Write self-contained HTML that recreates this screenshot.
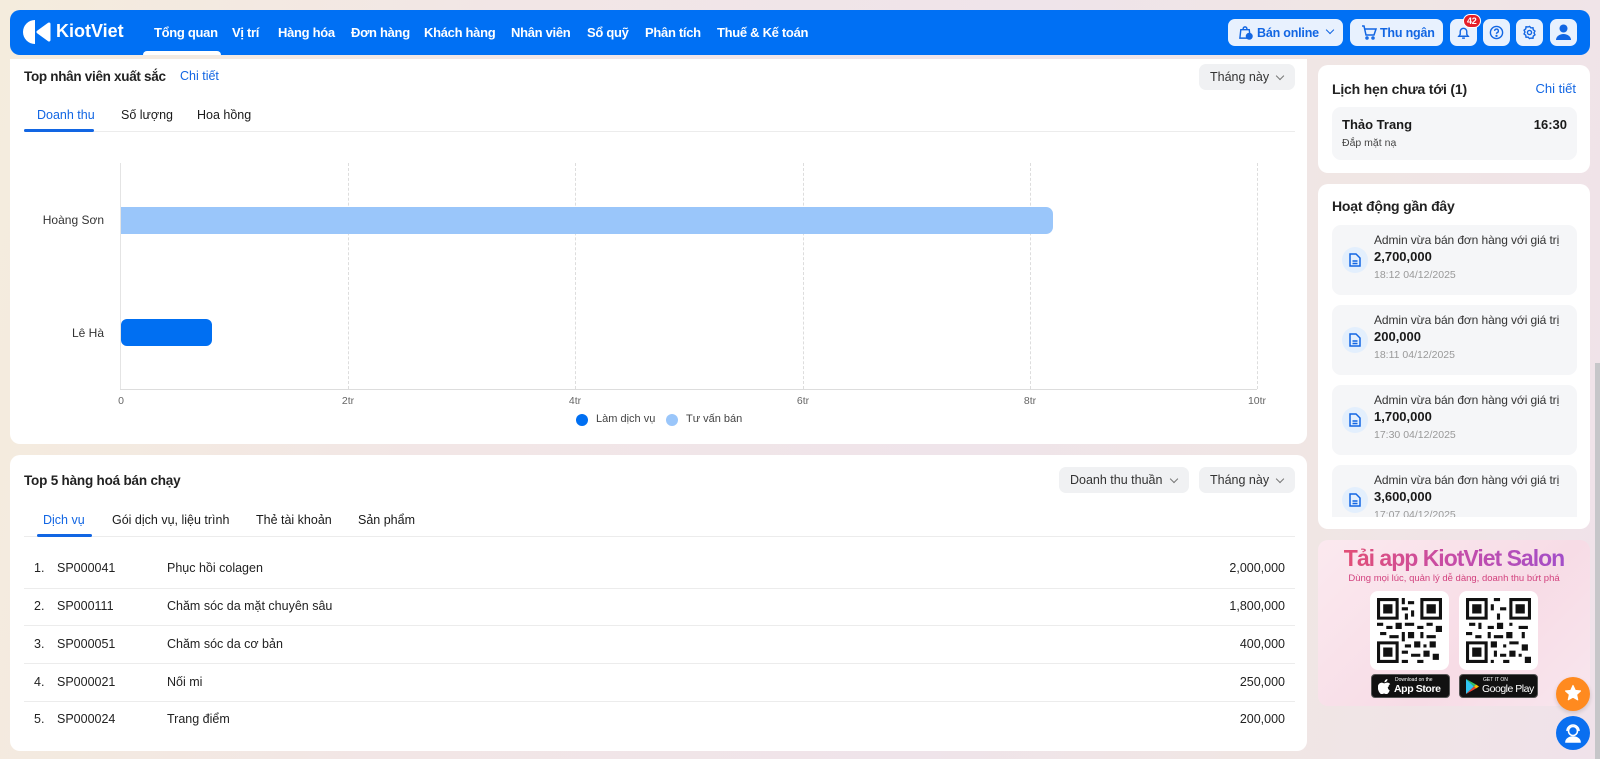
<!DOCTYPE html>
<html><head><meta charset="utf-8"><style>
*{box-sizing:border-box;margin:0;padding:0}
body{width:1600px;height:759px;overflow:hidden;font-family:"Liberation Sans",sans-serif;color:#1a1a1a;background:linear-gradient(100deg,#f4ecdd 0%,#f2e6e6 30%,#efe4ea 60%,#f0e6e4 80%,#f0e2ea 100%);position:relative;font-size:13px}
.a{position:absolute;white-space:nowrap}
.card{position:absolute;background:#fff;border-radius:10px}
.nav{position:absolute;left:10px;top:10px;width:1580px;height:45px;background:#0070f4;border-radius:10px}
.ni{position:absolute;top:15px;color:#fff;font-weight:bold;font-size:13px;letter-spacing:-0.3px}
.btn{position:absolute;top:9px;height:27px;background:#e8f1fe;border-radius:7px;color:#1266e3;font-weight:bold;font-size:12.5px;letter-spacing:-0.2px}
.pill{position:absolute;height:26px;background:#f0f1f3;border-radius:7px;font-size:12.5px;color:#333;line-height:26px;padding-left:11px}
.pill:after{content:"";position:absolute;right:12px;top:9px;width:5px;height:5px;border-right:1px solid #777;border-bottom:1px solid #777;transform:rotate(45deg)}
.grid{position:absolute;top:163px;height:226px;border-left:1px dashed #ddd}
.xl{position:absolute;top:395px;font-size:10.5px;color:#666;transform:translateX(-50%)}
.item{position:absolute;left:14px;width:245px;height:70px;background:#f5f6f8;border-radius:9px}
.ic{position:absolute;left:10px;top:22px;width:26px;height:26px;border-radius:50%;background:#e3effd}
.row{position:absolute;left:24px;width:1271px;height:1px;background:#ececec}
.rt{position:absolute;font-size:12.5px;color:#222}
.it1{position:absolute;left:42px;top:8px;font-size:12px;color:#333;letter-spacing:-0.1px;white-space:nowrap}
</style></head><body>

<div class="nav">
  <svg class="a" style="left:13px;top:8px" width="28" height="28" viewBox="0 0 28 28"><path d="M12 2 A12 12 0 0 0 12 26 Z" fill="#fff"/><path d="M26 6 L15 14 L26 22 Z" fill="#fff" stroke="#fff" stroke-width="3" stroke-linejoin="round"/></svg>
  <div class="a" style="left:46px;top:11px;color:#fff;font-weight:bold;font-size:18px">KiotViet</div>
  <div class="ni" style="left:144px">Tổng quan</div>
  <div class="a" style="left:133px;top:41px;width:78px;height:4px;background:#fff;border-radius:4px 4px 0 0"></div>
  <div class="ni" style="left:222px">Vị trí</div>
  <div class="ni" style="left:268px">Hàng hóa</div>
  <div class="ni" style="left:341px">Đơn hàng</div>
  <div class="ni" style="left:414px">Khách hàng</div>
  <div class="ni" style="left:501px">Nhân viên</div>
  <div class="ni" style="left:577px">Sổ quỹ</div>
  <div class="ni" style="left:635px">Phân tích</div>
  <div class="ni" style="left:707px">Thuế &amp; Kế toán</div>
  <div class="btn" style="left:1218px;width:115px"><svg class="a" style="left:10px;top:6px" width="15" height="15" viewBox="0 0 16 16" fill="none" stroke="#1266e3" stroke-width="1.5"><path d="M3 5h9l1 9H2z"/><path d="M5.5 5V4a2 2 0 0 1 4 0v1"/><circle cx="12" cy="12" r="3" fill="#1266e3"/></svg><span class="a" style="left:29px;top:7px">Bán online</span><span class="a" style="left:99px;top:8px;width:6px;height:6px;border-right:1.5px solid #1266e3;border-bottom:1.5px solid #1266e3;transform:rotate(45deg)"></span></div>
  <div class="btn" style="left:1340px;width:93px"><svg class="a" style="left:11px;top:6px" width="16" height="15" viewBox="0 0 16 15" fill="none" stroke="#1266e3" stroke-width="1.5"><path d="M1 1h2l2 9h8l2-6H4"/><circle cx="6" cy="13" r="1"/><circle cx="12" cy="13" r="1"/></svg><span class="a" style="left:30px;top:7px">Thu ngân</span></div>
  <div class="btn" style="left:1440px;width:27px"><svg class="a" style="left:6px;top:6px" width="15" height="15" viewBox="0 0 16 16" fill="none" stroke="#1266e3" stroke-width="1.5"><path d="M3 12h10l-1.5-2V7a3.5 3.5 0 0 0-7 0v3z"/><path d="M6.5 14h3"/></svg><span class="a" style="left:13px;top:-5px;background:#e5202a;color:#fff;font-size:9px;border-radius:8px;padding:1px 3px;border:1px solid #fff">42</span></div>
  <div class="btn" style="left:1473px;width:27px"><svg class="a" style="left:6px;top:6px" width="15" height="15" viewBox="0 0 16 16" fill="none" stroke="#1266e3" stroke-width="1.5"><circle cx="8" cy="8" r="6.5"/><path d="M6 6.3a2 2 0 1 1 2.5 2c-.5.2-.5.6-.5 1.2"/><circle cx="8" cy="11.6" r=".5" fill="#1266e3"/></svg></div>
  <div class="btn" style="left:1506px;width:27px"><svg class="a" style="left:6px;top:6px" width="15" height="15" viewBox="0 0 16 16" fill="none" stroke="#1266e3" stroke-width="1.5"><circle cx="8" cy="8" r="2.2"/><path d="M8 1.5l1.5 1.6 2.2-.2.3 2.2 1.8 1.4-1 2 1 2-1.8 1.4-.3 2.2-2.2-.2L8 14.5l-1.5-1.6-2.2.2-.3-2.2L2.2 9.5l1-2-1-2L4 4.1l.3-2.2 2.2.2z"/></svg></div>
  <div class="btn" style="left:1540px;width:27px"><svg class="a" style="left:5px;top:4px" width="17" height="19" viewBox="0 0 17 19" fill="#1266e3"><circle cx="8.5" cy="5.5" r="4"/><path d="M1 17a7.5 6 0 0 1 15 0z"/></svg></div>
</div>

<!-- card 1 -->
<div class="card" style="left:10px;top:59px;width:1297px;height:385px;border-radius:0 0 10px 10px"></div>
<div class="a" style="left:24px;top:69px;font-size:13.5px;font-weight:bold;color:#222;letter-spacing:-0.3px">Top nhân viên xuất sắc</div>
<div class="a" style="left:180px;top:69px;font-size:12.5px;color:#1266e3">Chi tiết</div>
<div class="pill" style="left:1199px;top:64px;width:96px">Tháng này</div>
<div class="a" style="left:24px;top:131px;width:1271px;height:1px;background:#ececec"></div>
<div class="a" style="left:37px;top:108px;color:#1266e3;font-size:12.5px">Doanh thu</div>
<div class="a" style="left:24px;top:129px;width:70px;height:3px;background:#1266e3;border-radius:2px"></div>
<div class="a" style="left:121px;top:108px;font-size:12.5px">Số lượng</div>
<div class="a" style="left:197px;top:108px;font-size:12.5px">Hoa hồng</div>

<div class="grid" style="left:120px;border-left:1px solid #e4e4e4"></div>
<div class="grid" style="left:348px"></div>
<div class="grid" style="left:575px"></div>
<div class="grid" style="left:803px"></div>
<div class="grid" style="left:1030px"></div>
<div class="grid" style="left:1257px"></div>
<div class="a" style="left:120px;top:389px;width:1137px;height:1px;background:#ddd"></div>
<div class="a" style="left:121px;top:207px;width:932px;height:27px;background:#9ac6fa;border-radius:0 7px 7px 0"></div>
<div class="a" style="left:121px;top:319px;width:91px;height:27px;background:#006ff2;border-radius:6px"></div>
<div class="a" style="left:0;width:104px;text-align:right;top:213px;font-size:12px;color:#333">Hoàng Sơn</div>
<div class="a" style="left:0;width:104px;text-align:right;top:326px;font-size:12px;color:#333">Lê Hà</div>
<div class="xl" style="left:121px">0</div>
<div class="xl" style="left:348px">2tr</div>
<div class="xl" style="left:575px">4tr</div>
<div class="xl" style="left:803px">6tr</div>
<div class="xl" style="left:1030px">8tr</div>
<div class="xl" style="left:1257px">10tr</div>
<div class="a" style="left:576px;top:414px;width:12px;height:12px;border-radius:50%;background:#006ff2"></div>
<div class="a" style="left:596px;top:413px;font-size:11px;color:#444">Làm dịch vụ</div>
<div class="a" style="left:666px;top:414px;width:12px;height:12px;border-radius:50%;background:#9ac6fa"></div>
<div class="a" style="left:686px;top:413px;font-size:11px;color:#444">Tư vấn bán</div>

<!-- card 2 -->
<div class="card" style="left:10px;top:455px;width:1297px;height:296px"></div>
<div class="a" style="left:24px;top:473px;font-size:13.5px;font-weight:bold;color:#222;letter-spacing:-0.2px">Top 5 hàng hoá bán chạy</div>
<div class="pill" style="left:1059px;top:467px;width:130px">Doanh thu thuần</div>
<div class="pill" style="left:1199px;top:467px;width:96px">Tháng này</div>
<div class="a" style="left:24px;top:536px;width:1271px;height:1px;background:#ececec"></div>
<div class="a" style="left:43px;top:513px;color:#1266e3;font-size:12.5px">Dịch vụ</div>
<div class="a" style="left:37px;top:534px;width:55px;height:3px;background:#1266e3;border-radius:2px"></div>
<div class="a" style="left:112px;top:513px;font-size:12.5px">Gói dịch vụ, liệu trình</div>
<div class="a" style="left:256px;top:513px;font-size:12.5px">Thẻ tài khoản</div>
<div class="a" style="left:358px;top:513px;font-size:12.5px">Sản phẩm</div>

<div class="rt" style="left:34px;top:561px">1.</div><div class="rt" style="left:57px;top:561px">SP000041</div><div class="rt" style="left:167px;top:561px">Phục hồi colagen</div><div class="rt" style="right:315px;top:561px">2,000,000</div>
<div class="row" style="top:588px"></div>
<div class="rt" style="left:34px;top:599px">2.</div><div class="rt" style="left:57px;top:599px">SP000111</div><div class="rt" style="left:167px;top:599px">Chăm sóc da mặt chuyên sâu</div><div class="rt" style="right:315px;top:599px">1,800,000</div>
<div class="row" style="top:625px"></div>
<div class="rt" style="left:34px;top:637px">3.</div><div class="rt" style="left:57px;top:637px">SP000051</div><div class="rt" style="left:167px;top:637px">Chăm sóc da cơ bản</div><div class="rt" style="right:315px;top:637px">400,000</div>
<div class="row" style="top:663px"></div>
<div class="rt" style="left:34px;top:675px">4.</div><div class="rt" style="left:57px;top:675px">SP000021</div><div class="rt" style="left:167px;top:675px">Nối mi</div><div class="rt" style="right:315px;top:675px">250,000</div>
<div class="row" style="top:701px"></div>
<div class="rt" style="left:34px;top:712px">5.</div><div class="rt" style="left:57px;top:712px">SP000024</div><div class="rt" style="left:167px;top:712px">Trang điểm</div><div class="rt" style="right:315px;top:712px">200,000</div>

<!-- right column -->
<div class="card" style="left:1318px;top:65px;width:272px;height:108px">
  <div class="a" style="left:14px;top:16px;font-size:14px;font-weight:bold;color:#222;letter-spacing:-0.2px">Lịch hẹn chưa tới (1)</div>
  <div class="a" style="right:14px;top:16px;font-size:13px;color:#1266e3">Chi tiết</div>
  <div class="a" style="left:14px;top:42px;width:245px;height:53px;background:#f5f6f8;border-radius:9px">
    <div class="a" style="left:10px;top:10px;font-weight:bold;font-size:13px">Thảo Trang</div>
    <div class="a" style="right:10px;top:10px;font-weight:bold;font-size:13px">16:30</div>
    <div class="a" style="left:10px;top:30px;font-size:10.5px;color:#444">Đắp mặt nạ</div>
  </div>
</div>
<div class="card" style="left:1318px;top:184px;width:272px;height:345px;overflow:hidden">
  <div class="a" style="left:14px;top:14px;font-size:14px;font-weight:bold;color:#222;letter-spacing:-0.2px">Hoạt động gần đây</div>
  <div style="position:absolute;left:0;top:0;width:272px;height:333px;overflow:hidden">
  <div class="item" style="top:41px"><div class="ic"><svg class="a" style="left:7px;top:6px" width="12" height="14" viewBox="0 0 12 14" fill="none" stroke="#1266e3" stroke-width="1.5"><path d="M1 1h6l4 4v8H1z"/><path d="M3.5 8h5M3.5 10.5h5"/></svg></div><div class="it1">Admin vừa bán đơn hàng với giá trị</div><div class="a" style="left:42px;top:24px;font-size:13px;font-weight:bold">2,700,000</div><div class="a" style="left:42px;top:44px;font-size:10.5px;color:#999">18:12 04/12/2025</div></div>
  <div class="item" style="top:121px"><div class="ic"><svg class="a" style="left:7px;top:6px" width="12" height="14" viewBox="0 0 12 14" fill="none" stroke="#1266e3" stroke-width="1.5"><path d="M1 1h6l4 4v8H1z"/><path d="M3.5 8h5M3.5 10.5h5"/></svg></div><div class="it1">Admin vừa bán đơn hàng với giá trị</div><div class="a" style="left:42px;top:24px;font-size:13px;font-weight:bold">200,000</div><div class="a" style="left:42px;top:44px;font-size:10.5px;color:#999">18:11 04/12/2025</div></div>
  <div class="item" style="top:201px"><div class="ic"><svg class="a" style="left:7px;top:6px" width="12" height="14" viewBox="0 0 12 14" fill="none" stroke="#1266e3" stroke-width="1.5"><path d="M1 1h6l4 4v8H1z"/><path d="M3.5 8h5M3.5 10.5h5"/></svg></div><div class="it1">Admin vừa bán đơn hàng với giá trị</div><div class="a" style="left:42px;top:24px;font-size:13px;font-weight:bold">1,700,000</div><div class="a" style="left:42px;top:44px;font-size:10.5px;color:#999">17:30 04/12/2025</div></div>
  <div class="item" style="top:281px"><div class="ic"><svg class="a" style="left:7px;top:6px" width="12" height="14" viewBox="0 0 12 14" fill="none" stroke="#1266e3" stroke-width="1.5"><path d="M1 1h6l4 4v8H1z"/><path d="M3.5 8h5M3.5 10.5h5"/></svg></div><div class="it1">Admin vừa bán đơn hàng với giá trị</div><div class="a" style="left:42px;top:24px;font-size:13px;font-weight:bold">3,600,000</div><div class="a" style="left:42px;top:44px;font-size:10.5px;color:#999">17:07 04/12/2025</div></div>
  </div>
</div>

<div class="card" style="left:1318px;top:540px;width:272px;height:166px;background:linear-gradient(135deg,#fbe9ef,#f7dce6 60%,#f9e6ee)">
  <div class="a" style="left:0;width:272px;text-align:center;top:1px;font-size:23px;font-weight:bold;letter-spacing:-1px;background:linear-gradient(90deg,#e8506a,#c64ca8,#9a4fd0);-webkit-background-clip:text;background-clip:text;color:transparent;line-height:34px">Tải app KiotViet Salon</div>
  <div class="a" style="left:0;width:272px;text-align:center;top:33px;font-size:9.5px;color:#d2417e">Dùng mọi lúc, quản lý dễ dàng, doanh thu bứt phá</div>
  <div class="a" style="left:52px;top:51px;width:79px;height:79px;background:#fff;border-radius:8px"><svg class="a" style="left:7px;top:7px" width="65" height="65" viewBox="0 0 21 21"><g fill="#111"><path d="M0 0h7v7H0zM14 0h7v7h-7zM0 14h7v7H0z"/></g><g fill="#fff"><path d="M1 1h5v5H1zM15 1h5v5h-5zM1 15h5v5H1z"/></g><g fill="#111"><path d="M2 2h3v3H2zM16 2h3v3h-3zM2 16h3v3H2z"/><path d="M8 0h1v2H8zM10 1h2v1h-2zM8 3h2v1H8zM11 4h1v2h-1zM9 5h1v2H9zM0 8h2v1H0zM3 9h2v1H3zM6 8h2v2H6zM9 8h3v1H9zM13 9h2v1h-2zM16 8h2v1h-2zM19 9h2v2h-2zM1 11h2v1H1zM4 12h3v1H4zM8 11h1v3H8zM10 11h2v2h-2zM14 11h1v2h-1zM16 12h3v1h-3zM9 15h2v1H9zM12 14h2v2h-2zM15 15h1v1h-1zM17 14h2v2h-2zM8 17h2v1H8zM11 18h3v1h-3zM15 17h2v2h-2zM18 18h2v2h-2zM8 20h2v1H8zM13 20h2v1h-2z"/></g></svg></div>
  <div class="a" style="left:141px;top:51px;width:79px;height:79px;background:#fff;border-radius:8px"><svg class="a" style="left:7px;top:7px" width="65" height="65" viewBox="0 0 21 21"><g fill="#111"><path d="M0 0h7v7H0zM14 0h7v7h-7zM0 14h7v7H0z"/></g><g fill="#fff"><path d="M1 1h5v5H1zM15 1h5v5h-5zM1 15h5v5H1z"/></g><g fill="#111"><path d="M2 2h3v3H2zM16 2h3v3h-3zM2 16h3v3H2z"/><path d="M9 0h2v1H9zM8 2h1v2H8zM11 3h2v1h-2zM10 5h1v2h-1zM1 8h2v1H1zM4 8h1v2H4zM7 9h2v1H7zM10 8h2v2h-2zM14 8h1v1h-1zM17 9h3v1h-3zM0 11h2v1H0zM3 12h2v1H3zM7 11h1v2H7zM9 12h3v1H9zM13 11h2v2h-2zM18 11h1v2h-1zM8 14h2v2H8zM12 15h1v1h-1zM14 14h3v1h-3zM18 15h2v2h-2zM9 17h1v2H9zM11 18h2v1h-2zM14 17h2v2h-2zM17 18h1v1h-1zM19 19h2v2h-2zM8 20h1v1H8zM12 20h2v1h-2z"/></g></svg></div>
  <div class="a" style="left:53px;top:134px;width:79px;height:24px;background:#111;border-radius:4px;border:1px solid #555;overflow:hidden"><svg class="a" style="left:6px;top:4px" width="13" height="15" viewBox="0 0 13 15" fill="#fff"><path d="M10.5 8c0-2 1.6-2.8 1.7-2.9-1-1.4-2.4-1.5-2.9-1.5-1.2-.1-2.4.7-3 .7s-1.6-.7-2.6-.7C2.3 3.7 1 4.5.4 5.8-.9 8.1.1 11.6 1.4 13.4c.6.9 1.3 1.9 2.3 1.8.9 0 1.3-.6 2.4-.6s1.4.6 2.4.6 1.6-.9 2.2-1.8c.7-1 1-2 1-2.1 0 0-1.9-.7-1.900-3.3zM8.7 2.3c.5-.6.8-1.4.7-2.3-.7 0-1.6.5-2.1 1.1-.5.5-.9 1.4-.8 2.2.8.1 1.7-.4 2.2-1z"/></svg><span class="a" style="left:23px;top:2px;color:#fff;font-size:5px">Download on the</span><span class="a" style="left:22px;top:8px;color:#fff;font-size:10.5px;font-weight:bold;letter-spacing:-.4px">App Store</span></div>
  <div class="a" style="left:141px;top:134px;width:79px;height:24px;background:#111;border-radius:4px;border:1px solid #555;overflow:hidden"><svg class="a" style="left:6px;top:4px" width="13" height="15" viewBox="0 0 13 15"><path d="M0 0l8 7.5L0 15z" fill="#2fc5f4"/><path d="M0 0l10 5.5-2 2z" fill="#34c36a"/><path d="M0 15l10-5.5-2-2z" fill="#ea4335"/><path d="M10 5.5l3 2-3 2-2-2z" fill="#fbbc04"/></svg><span class="a" style="left:23px;top:2px;color:#fff;font-size:5px">GET IT ON</span><span class="a" style="left:22px;top:8px;color:#fff;font-size:10.5px;letter-spacing:-.5px">Google Play</span></div>
</div>

<div class="a" style="left:1595px;top:363px;width:5px;height:396px;background:#c6c6c9"></div>
<div class="a" style="left:1556px;top:677px;width:34px;height:34px;border-radius:50%;background:#ff8a1f;box-shadow:0 2px 4px rgba(0,0,0,.15)"><svg class="a" style="left:8px;top:7px" width="18" height="18" viewBox="0 0 24 24" fill="#fff"><path d="M12 2l3 6.5 7 .8-5.2 4.8 1.5 7L12 17.5 5.7 21l1.5-7L2 9.3l7-.8z" stroke="#fff" stroke-width="1.5" stroke-linejoin="round"/></svg></div>
<div class="a" style="left:1556px;top:716px;width:34px;height:34px;border-radius:50%;background:#0a6ff0"><svg class="a" style="left:8px;top:7px" width="18" height="20" viewBox="0 0 18 20" fill="none" stroke="#fff" stroke-width="1.6"><circle cx="9" cy="8" r="4.5"/><path d="M3 8a6 6 0 0 1 12 0"/><path d="M2 19a7 5 0 0 1 14 0z" fill="#fff"/></svg></div>
</body></html>
